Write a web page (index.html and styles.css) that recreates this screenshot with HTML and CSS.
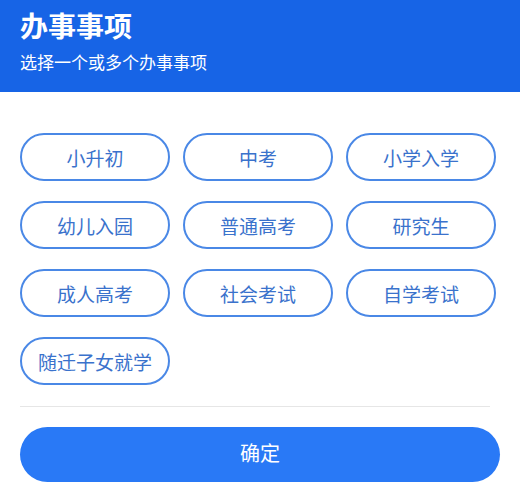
FILE: index.html
```html
<!DOCTYPE html>
<html lang="zh">
<head>
<meta charset="utf-8">
<link rel="stylesheet" href="styles.css">
</head>
<body>
<header class="header">
  <h1 class="title">办事事项</h1>
  <p class="subtitle">选择一个或多个办事事项</p>
</header>
<main class="content">
  <div class="tags">
    <button class="tag">小升初</button>
    <button class="tag">中考</button>
    <button class="tag">小学入学</button>
    <button class="tag">幼儿入园</button>
    <button class="tag">普通高考</button>
    <button class="tag">研究生</button>
    <button class="tag">成人高考</button>
    <button class="tag">社会考试</button>
    <button class="tag">自学考试</button>
    <button class="tag">随迁子女就学</button>
  </div>
  <div class="divider"></div>
  <button class="confirm">确定</button>
</main>
</body>
</html>
```
FILE: styles.css
```css
html, body {
  margin: 0;
  padding: 0;
  background: #ffffff;
  font-family: "Noto Sans CJK SC", "Noto Sans", sans-serif;
}
.header {
  background: #1764e6;
  height: 92px;
  box-sizing: border-box;
  padding: 8px 20px 0;
  color: #ffffff;
}
.title {
  margin: 0;
  font-size: 28px;
  font-weight: 700;
  line-height: 34px;
}
.subtitle {
  margin: 8px 0 0;
  font-size: 17px;
  line-height: 24px;
  font-weight: 400;
}
.content {
  padding: 41px 20px 0;
}
.tags {
  display: grid;
  grid-template-columns: repeat(3, 150px);
  column-gap: 13px;
  row-gap: 20px;
  padding-bottom: 21px;
}
.tag {
  height: 48px;
  box-sizing: border-box;
  border: 2px solid #4a88e6;
  border-radius: 24px;
  background: #ffffff;
  color: #3a72cc;
  font-family: "Noto Sans CJK SC", sans-serif;
  font-size: 19px;
  padding: 0;
}
.divider {
  height: 1px;
  background: #e6e6e6;
  margin-right: 10px;
}
.confirm {
  display: block;
  margin-top: 20px;
  width: 480px;
  height: 55px;
  border: none;
  border-radius: 28px;
  background: #2979f6;
  color: #ffffff;
  font-family: "Noto Sans CJK SC", sans-serif;
  font-size: 20px;
  padding: 0 0 4px;
}
```
